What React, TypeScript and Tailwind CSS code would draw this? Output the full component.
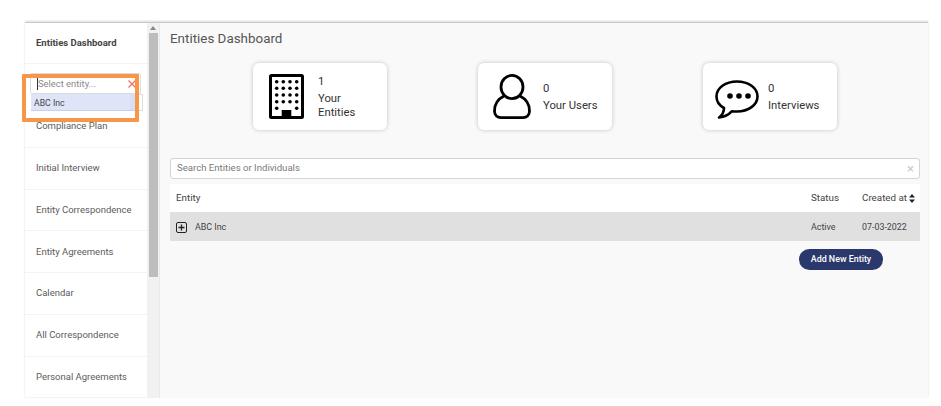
const menuItems = [
  "Compliance Plan",
  "Initial Interview",
  "Entity Correspondence",
  "Entity Agreements",
  "Calendar",
  "All Correspondence",
  "Personal Agreements",
];

const BuildingIcon = () => (
  <svg width="35" height="45" viewBox="0 0 35 45" className="shrink-0">
    <rect x="1.5" y="1.5" width="32" height="42" rx="1" fill="none" stroke="#000" strokeWidth="3" />
    {[7.7, 14.3, 21, 27.7, 34.3].map((y) =>
      [7.7, 14.3, 21, 27.7].map((x) =>
        y === 34.3 && (x === 14.3 || x === 21) ? null : <circle key={`${x}-${y}`} cx={x} cy={y} r="1.8" fill="#000" />
      )
    )}
    <rect x="12.7" y="36" width="9.6" height="9" fill="#000" />
  </svg>
);

const UserIcon = () => (
  <svg width="38" height="45" viewBox="0 0 38 45" fill="none" stroke="#000" strokeWidth="2.8" className="shrink-0">
    <ellipse cx="19" cy="13" rx="11" ry="11.6" />
    <path d="M11 22 C5 25 1.5 30 1.5 37 C1.5 41 4 43.6 8 43.6 L30 43.6 C34 43.6 36.5 41 36.5 37 C36.5 30 33 25 27 22" />
  </svg>
);

const ChatIcon = () => (
  <svg width="44" height="39" viewBox="0 0 44 39" className="shrink-0 mt-[5px]">
    <path
      d="M22 1.5 C10.5 1.5 1.5 8 1.5 16.5 C1.5 21.5 4.5 25.5 9 28 C9 31.5 7.5 35 4 37.5 C9.5 37 14 34.5 17 31.2 C18.6 31.4 20.3 31.5 22 31.5 C33.5 31.5 42.5 24.8 42.5 16.5 C42.5 8 33.5 1.5 22 1.5 Z"
      fill="none"
      stroke="#000"
      strokeWidth="2.6"
      strokeLinejoin="round"
    />
    <circle cx="15" cy="16" r="2.8" fill="#000" />
    <circle cx="24" cy="16" r="2.8" fill="#000" />
    <circle cx="33" cy="16" r="2.8" fill="#000" />
  </svg>
);

const StatCard = ({ icon, count, label, gap }: { icon: React.ReactNode; count: string; label: React.ReactNode; gap: string }) => (
  <div className={`w-[134px] h-[67px] bg-white rounded-[6px] shadow-[0_0_4px_rgba(0,0,0,0.22)] flex items-center pl-[16px] ${gap}`}>
    {icon}
    <div className="pt-[2px] text-[11.3px] leading-[14px] text-[#333]">
      <div className="mb-[3px]">{count}</div>
      <div>{label}</div>
    </div>
  </div>
);

const App = () => {
  return (
    <div className="relative w-[941px] h-[406px] bg-white overflow-hidden font-['Roboto',sans-serif]">
      <div className="h-[22px]"></div>
      <div className="ml-[25px] mr-[13px] h-[376px] flex border-t border-[#c9c9c9] shadow-[0_-1px_2px_rgba(0,0,0,0.15)]">
        {/* sidebar */}
        <div className="w-[122px] shrink-0 bg-white text-[9.5px] text-[#5c5c5c]">
          <div className="h-[41px] flex items-center pl-[11px] font-bold text-[#444] border-b border-[#f3f3f3]">
            Entities Dashboard
          </div>
          <div className="h-[42px]"></div>
          {menuItems.map((item) => (
            <div key={item} className="h-[41.75px] flex items-center pl-[11px] border-b border-[#f3f3f3] whitespace-nowrap">
              {item}
            </div>
          ))}
        </div>

        {/* scrollbar */}
        <div className="w-[13px] shrink-0 bg-[#f1f1f1] border-r border-[#e9e9e9] flex flex-col items-center">
          <div className="h-[10px] flex items-center justify-center">
            <div className="w-0 h-0 border-x-[3px] border-x-transparent border-b-[4px] border-b-[#888]"></div>
          </div>
          <div className="w-[9px] h-[244px] bg-[#bdbdbd]"></div>
        </div>

        {/* main */}
        <div className="flex-1 bg-[#f9f9f9] pl-[10px] pr-[8px]">
          <div className="pt-[7px] h-[40px] text-[13.4px] leading-[18px] text-[#555]">Entities Dashboard</div>
          <div className="flex justify-between pl-[83px] pr-[83px]">
            <StatCard
              icon={<BuildingIcon />}
              count="1"
              gap="gap-[14px]"
              label={
                <>
                  Your
                  <br />
                  Entities
                </>
              }
            />
            <StatCard icon={<UserIcon />} count="0" gap="gap-[12px] !pl-[15px]" label="Your Users" />
            <StatCard icon={<ChatIcon />} count="0" gap="gap-[9px] !pl-[12px]" label="Interviews" />
          </div>

          <div className="mt-[28px] h-[21px] bg-white border border-[#d4d4d4] rounded-[3px] flex items-center justify-between pl-[6px] pr-[5px] text-[9.6px] text-[#7b7b7b]">
            <span>Search Entities or Individuals</span>
            <span className="text-[#c8c8c8] text-[13px] leading-none">×</span>
          </div>

          <div className="mt-[5px] text-[9.8px] text-[#444]">
            <div className="h-[28px] bg-white flex items-center pl-[6px] pr-[6px]">
              <span className="flex-1">Entity</span>
              <span className="w-[51px]">Status</span>
              <span className="w-[52px] whitespace-nowrap flex items-center">
                Created at
                <svg width="6" height="9" viewBox="0 0 6 9" className="ml-[2px] shrink-0">
                  <path d="M3 0 L6 3.6 L0 3.6 Z M3 9 L6 5.4 L0 5.4 Z" fill="#222" />
                </svg>
              </span>
            </div>
            <div className="h-[29px] bg-[#e0e0e0] flex items-center pl-[6px] pr-[6px] pt-[2px] text-[8.9px]">
              <span className="flex-1 flex items-center gap-[8px]">
                <span className="w-[11px] h-[11px] border-[1.5px] border-[#222] rounded-[2px] flex items-center justify-center">
                  <svg width="7" height="7" viewBox="0 0 7 7">
                    <path d="M3.5 0.5 V6.5 M0.5 3.5 H6.5" stroke="#222" strokeWidth="1.3" />
                  </svg>
                </span>
                ABC Inc
              </span>
              <span className="w-[51px]">Active</span>
              <span className="w-[52px]">07-03-2022</span>
            </div>
          </div>

          <div className="mt-[8px] flex justify-end pr-[37px]">
            <div className="w-[84px] h-[21px] rounded-full bg-[#2b386b] text-white font-medium text-[8.9px] flex items-center justify-center">
              Add New Entity
            </div>
          </div>
        </div>
      </div>

      {/* entity select with its open dropdown */}
      <div className="absolute left-[30px] top-[73px] w-[111px] h-[21px] bg-white border border-[#dcdcdc] rounded-[2px] flex items-center justify-between pl-[6px] pr-[3px] text-[9.4px] text-[#8a8a8a]">
        <span className="border-l border-[#333] leading-[12px]">Select entity...</span>
        <svg width="8" height="8" viewBox="0 0 8 8" className="mr-[1px]">
          <path d="M0.5 0.5 L7.5 7.5 M7.5 0.5 L0.5 7.5" stroke="#f0706a" strokeWidth="1.3" />
        </svg>
      </div>
      <div className="absolute left-[31px] top-[94px] w-[112px] h-[17px] bg-white border border-[#dcdcdc] flex items-center justify-end pr-[8px] text-[8px] text-[#888]">
        ⋮
      </div>
      <div className="absolute left-[31px] top-[94px] w-[105px] h-[17px] bg-[#dfe5f9] border-b border-[#c9cfe6] flex items-center pl-[3px] pt-[3px] text-[8.7px] text-[#444]">
        ABC Inc
      </div>
      <div className="absolute left-[130px] top-[94px] w-[6px] h-[16px] bg-[#d8def3]"></div>

      {/* orange highlight */}
      <div className="absolute left-[22px] top-[74px] w-[117px] h-[48px] border-[4px] border-[#f79646] rounded-[1px]"></div>
    </div>
  );
};

export default App;
